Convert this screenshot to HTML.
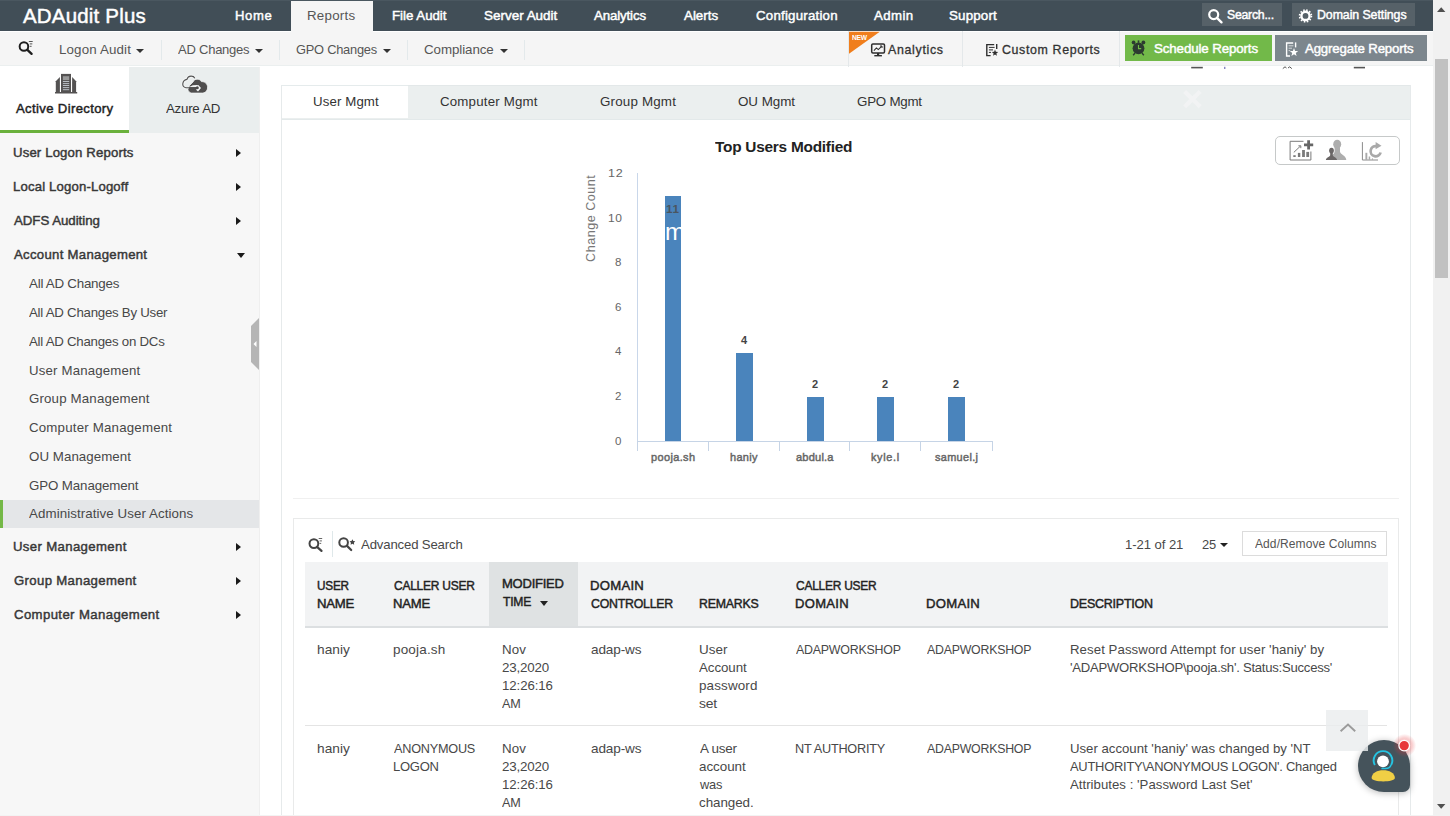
<!DOCTYPE html>
<html>
<head>
<meta charset="utf-8">
<title>ADAudit Plus</title>
<style>
*{box-sizing:border-box;margin:0;padding:0}
html,body{width:1450px;height:816px;overflow:hidden;background:#fff}
body{font-family:"Liberation Sans",sans-serif;font-size:14px;color:#333;position:relative}
.a{position:absolute}
.t{position:absolute;white-space:nowrap;line-height:1;transform-origin:0 0}
.cd{position:absolute;width:0;height:0;border-left:4.7px solid transparent;border-right:4.7px solid transparent;border-top:5px solid #333}
.cr{position:absolute;width:0;height:0;border-top:4.5px solid transparent;border-bottom:4.5px solid transparent;border-left:5.5px solid #1a1a1a}
svg{position:absolute;overflow:visible}
</style>
</head>
<body>
<!-- ===== top bar ===== -->
<div class="a" style="left:0;top:0;width:1432.5px;height:30.8px;background:#414e57"></div>
<div class="a" style="left:0;top:0;width:1432.5px;height:1px;background:#4a5760"></div>

<div class="a" style="left:1202px;top:3px;width:80px;height:23px;background:#566168"></div>
<div class="a" style="left:1292px;top:3px;width:123px;height:23px;background:#566168"></div>
<!-- ===== sub bar ===== -->
<div class="a" style="left:0;top:32px;width:1432.5px;height:34px;background:#f5f5f5;border-bottom:1px solid #ebefef"></div>
<div class="a" style="left:291px;top:1px;width:82px;height:32px;background:#f5f5f5"></div>
<div class="a" style="left:161px;top:40px;width:1px;height:20px;background:#e3e9eb"></div>
<div class="a" style="left:279px;top:40px;width:1px;height:20px;background:#e3e9eb"></div>
<div class="a" style="left:407px;top:40px;width:1px;height:20px;background:#e3e9eb"></div>
<div class="a" style="left:524px;top:40px;width:1px;height:20px;background:#e3e9eb"></div>
<div class="a" style="left:848px;top:31px;width:1px;height:36px;background:#e4e8ea"></div>
<div class="a" style="left:962px;top:31px;width:1px;height:36px;background:#e4e8ea"></div>
<div class="a" style="left:1119px;top:31px;width:1px;height:36px;background:#e4e8ea"></div>
<div class="cd" style="left:135.9px;top:49px;border-left-width:4.1px;border-right-width:4.1px;border-top-width:4.4px"></div>
<div class="cd" style="left:254.8px;top:49px;border-left-width:4.1px;border-right-width:4.1px;border-top-width:4.4px"></div>
<div class="cd" style="left:383.3px;top:49px;border-left-width:4.1px;border-right-width:4.1px;border-top-width:4.4px"></div>
<div class="cd" style="left:499.9px;top:49px;border-left-width:4.1px;border-right-width:4.1px;border-top-width:4.4px"></div>
<div class="a" style="left:1125px;top:34.9px;width:146.8px;height:26.5px;background:#72b949"></div>
<div class="a" style="left:1275.2px;top:34.9px;width:151.8px;height:26.5px;background:#7c868d"></div>
<!-- ===== sidebar ===== -->
<div class="a" style="left:0;top:66.5px;width:259px;height:750px;background:#f7f7f7"></div>
<div class="a" style="left:259px;top:67px;width:1px;height:749px;background:#efefef"></div>
<div class="a" style="left:0;top:66.5px;width:128.5px;height:66.3px;background:#fff;border-bottom:3.6px solid #6ab13c"></div>
<div class="a" style="left:128.5px;top:66.5px;width:130.5px;height:66.5px;background:#eaeeee"></div>
<div class="cr" style="left:236px;top:149px"></div>
<div class="cr" style="left:236px;top:183px"></div>
<div class="cr" style="left:236px;top:217px"></div>
<div class="cd" style="left:236.5px;top:253px;border-top-color:#1a1a1a"></div>
<div class="cr" style="left:236px;top:543px"></div>
<div class="cr" style="left:236px;top:577px"></div>
<div class="cr" style="left:236px;top:611px"></div>
<div class="a" style="left:0;top:500px;width:259px;height:28px;background:#e4e6e8;border-left:3px solid #74b847"></div>
<!-- collapse handle -->
<svg style="left:251px;top:318px" width="8" height="52" viewBox="0 0 8 52"><path d="M8 0 L0 8 L0 44 L8 52 Z" fill="#b5b5b5"/><path d="M5.5 23 L2.5 26 L5.5 29 Z" fill="#fff"/></svg>
<!-- ===== main ===== -->
<div class="a" style="left:281px;top:85px;width:1130px;height:740px;border:1px solid #e6eaeb"></div>
<div class="a" style="left:282px;top:85px;width:1128px;height:34.6px;background:#ebefef;border-top:1px solid #e3e8e9;border-bottom:1.6px solid #e3e9ea"></div>
<div class="a" style="left:282px;top:85px;width:126px;height:33px;background:#fff;border-top:1px solid #e5ebec"></div>
<!-- chart -->
<div class="a" style="left:1275px;top:136px;width:124.5px;height:28.6px;border:1.2px solid #c6c9c9;border-radius:5px"></div>
<div class="a" style="left:636.6px;top:173px;width:1.6px;height:268px;background:#c9d7ea"></div>
<div class="a" style="left:637px;top:440.6px;width:356px;height:1.2px;background:#c6d4e6"></div>
<div class="a" style="left:637px;top:441px;width:1px;height:10.3px;background:#c6d4e6"></div>
<div class="a" style="left:708px;top:441px;width:1px;height:10.3px;background:#c6d4e6"></div>
<div class="a" style="left:778.5px;top:441px;width:1px;height:10.3px;background:#c6d4e6"></div>
<div class="a" style="left:849.3px;top:441px;width:1px;height:10.3px;background:#c6d4e6"></div>
<div class="a" style="left:919.5px;top:441px;width:1px;height:10.3px;background:#c6d4e6"></div>
<div class="a" style="left:992px;top:441px;width:1px;height:10.3px;background:#c6d4e6"></div>
<div class="a" style="left:664.5px;top:196px;width:16.9px;height:245px;background:#4a84bc"></div>
<div class="a" style="left:735.6px;top:352.5px;width:17px;height:88.5px;background:#4a84bc"></div>
<div class="a" style="left:806.8px;top:397px;width:17px;height:44px;background:#4a84bc"></div>
<div class="a" style="left:876.9px;top:397px;width:17px;height:44px;background:#4a84bc"></div>
<div class="a" style="left:948.1px;top:397px;width:17px;height:44px;background:#4a84bc"></div>
<div class="a" style="left:664.5px;top:196px;width:16.9px;height:80px;overflow:hidden"><div class="t" style="left:0.5px;top:23.8px;font-size:24px;color:#fff">m</div></div>
<div class="t" style="left:583px;top:212px;font-size:12.6px;color:#777;letter-spacing:0.5px;transform:rotate(-90deg);transform-origin:center;width:90px;text-align:center;margin-left:-37px">Change Count</div>
<!-- separator under chart -->
<div class="a" style="left:293px;top:498px;width:1106px;height:1px;background:#f0f0f0"></div>
<!-- table box -->
<div class="a" style="left:293px;top:518px;width:1106px;height:310px;border:1px solid #e9eaea"></div>
<div class="a" style="left:332px;top:531px;width:1px;height:26px;background:#dfe8ea"></div>
<div class="a" style="left:1242px;top:531px;width:145px;height:25px;border:1px solid #dcdcdc;background:#fff"></div>
<div class="cd" style="left:1219.6px;top:543.2px;border-top-color:#222;border-left-width:4.2px;border-right-width:4.2px;border-top-width:4.2px"></div>
<div class="a" style="left:304.5px;top:561.5px;width:1083px;height:66.3px;background:#f2f3f4;border-bottom:2px solid #dcdfe1"></div>
<div class="a" style="left:489px;top:561.5px;width:89px;height:64.3px;background:#dfe2e3"></div>
<div class="cd" style="left:540px;top:601px;border-top-color:#222"></div>
<div class="a" style="left:305px;top:725px;width:1082px;height:1px;background:#e4e4e4"></div>
<div class="a" style="left:0;top:815px;width:1433px;height:1px;background:#f3f3f3"></div>
<svg style="left:0;top:0" width="1450" height="816" viewBox="0 0 1450 816">
<!-- subbar search -->
<g fill="none" stroke="#1e1e1e" stroke-linecap="round"><circle cx="23.95" cy="46.45" r="4.3" stroke-width="2"/><path d="M27.4 49.9 L31.6 53.9" stroke-width="2.3"/></g>
<path d="M28.8 41.5H32.7M29.8 43.9H32.3M29.8 46.3H31.6" stroke="#555" stroke-width="1" fill="none"/>
<!-- topbar search + gear -->
<g fill="none" stroke="#fff" stroke-linecap="round"><circle cx="1213.7" cy="14.6" r="4.5" stroke-width="2.2"/><path d="M1217.2 18.1 L1221.5 22.3" stroke-width="2.4"/></g>
<circle cx="1305.5" cy="15.9" r="4.1" fill="none" stroke="#fff" stroke-width="2.4"/>
<circle cx="1305.5" cy="15.9" r="5.9" fill="none" stroke="#fff" stroke-width="1.7" stroke-dasharray="1.55 1.54"/>
<!-- NEW -->
<polygon points="849,31.8 879.8,31.8 849,53.7" fill="#f07e1c"/>
<!-- analytics monitor -->
<g fill="none" stroke="#2e2e2e"><rect x="871.7" y="43.9" width="12.8" height="9" rx="1.2" stroke-width="1.5"/><path d="M878.1 53V55.2" stroke-width="2.2"/><path d="M874.3 55.7H881.9" stroke-width="1.4"/><path d="M873.9 50.6L876.4 47.9L878.3 49.6L881.6 46.3" stroke-width="1.1"/><path d="M880 46H882V48" stroke-width="1"/></g>
<!-- custom reports -->
<g fill="none" stroke="#2e2e2e"><path d="M994.2 44.6H986.8V55.6H990.6" stroke-width="1.4"/><path d="M996.7 44V49" stroke-width="1.4"/><path d="M988.9 47.4H994.6M988.9 49.9H993M988.9 52.4H991" stroke-width="1"/></g>
<polygon points="995.00,49.60 995.84,51.84 998.23,51.95 996.36,53.44 997.00,55.75 995.00,54.43 993.00,55.75 993.64,53.44 991.77,51.95 994.16,51.84" fill="#2e2e2e"/>
<!-- schedule alarm -->
<g fill="#2c3a30"><circle cx="1138.5" cy="48.3" r="5.9"/><circle cx="1133.6" cy="42.4" r="1.9"/><circle cx="1143.4" cy="42.4" r="1.9"/><rect x="1137.7" y="40.4" width="1.6" height="2.4"/></g>
<path d="M1135 53L1133.2 55.2M1142 53L1143.8 55.2" stroke="#2c3a30" stroke-width="1.4" fill="none"/>
<path d="M1138.5 45V48.6H1141.2" stroke="#71b947" stroke-width="1.1" fill="none"/>
<!-- aggregate -->
<g fill="none" stroke="#fff"><path d="M1293.2 43H1286.6V56H1290" stroke-width="1.4"/><path d="M1295.6 42.4V47.4" stroke-width="1.4"/><path d="M1288.6 45.8H1293.4M1288.6 48.2H1292M1288.6 50.6H1290.2" stroke-width="0.9" stroke-opacity="0.75"/></g>
<polygon points="1294.00,48.00 1295.09,50.90 1298.18,51.04 1295.76,52.97 1296.59,55.96 1294.00,54.25 1291.41,55.96 1292.24,52.97 1289.82,51.04 1292.91,50.90" fill="#fff"/>
<!-- remnants under subbar -->
<rect x="1191.2" y="66.8" width="11.6" height="1.6" fill="#555"/><rect x="1224.3" y="66.8" width="1" height="2.2" fill="#55a"/>
<path d="M1282.8 68.6L1285 66.8L1286.5 68M1288 68L1289.7 66.8L1291.8 68.6" stroke="#555" stroke-width="1" fill="none"/>
<rect x="1353.8" y="66.8" width="11.2" height="1.6" fill="#555"/>
<!-- AD building -->
<g fill="#545252"><rect x="61" y="73.9" width="10" height="18.4"/><polygon points="55.8,81.2 59.9,77 59.9,92.3 55.8,92.3"/><polygon points="72.1,77 76.1,81.2 76.1,92.3 72.1,92.3"/><rect x="55" y="92" width="22.2" height="1.5"/></g>
<rect x="62.9" y="76.2" width="6.3" height="3.9" fill="#9a9a9a"/>
<path d="M62.9 81.5H69.2M62.9 83.6H69.2M62.9 85.5H69.2M62.9 87.6H69.2M62.9 89.7H69.2" stroke="#c4cbd1" stroke-width="0.9" fill="none"/>
<!-- Azure cloud -->
<path d="M194.8 78.2 C193.6 75.4 188.2 75 186.9 79.4 C182.4 80 180.9 86.8 185.9 87.7" fill="none" stroke="#f6f8f8" stroke-width="2.6"/>
<path d="M191.6 93.1 C189.4 92.8 188 91 187.9 89.2 L189.6 85.4 L193.2 81.8 C194.2 78.4 199.8 78.2 201.4 81.6 C205.8 81.2 208.8 85.6 207.2 89.6 C206.4 91.8 204.6 93.1 202.5 93.1 Z" fill="#4f4e4e" stroke="#f3f5f5" stroke-width="0.8"/>
<polygon points="189.2,87 192.8,85.3 197.2,84.9 197.2,87.1" fill="#f1f3f3"/>
<polygon points="196.4,85.6 198.3,84.9 201,88.1 198,91.5 196.4,90" fill="#f6f8f8"/>
<path d="M194.8 78.2 C193.6 75.4 188.2 75 186.9 79.4 C182.4 80 180.9 86.8 185.9 87.7 H197" fill="none" stroke="#555" stroke-width="1.15"/>
<circle cx="197.3" cy="87.8" r="1.5" fill="#4a4949"/>
<!-- chart icons -->
<g fill="none" stroke="#7a7a7a" stroke-width="1"><path d="M1303.5 141.3H1290.1V160H1310.9V151.5"/><path d="M1293.8 152.4L1300.3 146.2"/><path d="M1298.4 145.8H1300.8V148.2"/></g>
<g fill="#7a7a7a"><rect x="1293.3" y="155.2" width="2.4" height="1.8"/><rect x="1297.9" y="152.9" width="2.4" height="4.1"/><rect x="1302.1" y="150" width="2.8" height="7"/><rect x="1306.3" y="151.9" width="2.8" height="5.1"/></g>
<path d="M1308.6 140.3V149.5M1304 144.9H1313.2" stroke="#666" stroke-width="2.8" fill="none"/>
<g fill="#adadad"><ellipse cx="1337.2" cy="144.3" rx="4" ry="4.6"/><path d="M1334.6 147.5 H1340 V151.5 C1340 154.5 1346.3 155.5 1346.3 159.9 H1329.8 C1329.8 155.5 1334.6 154.5 1334.6 151.5Z"/></g>
<g fill="#6a6666"><ellipse cx="1331.5" cy="150.6" rx="2.4" ry="2.9"/><path d="M1330.2 152.8 H1332.8 V155 C1332.8 157 1337 157.5 1337 159.9 H1325.9 C1325.9 157.5 1330.2 157 1330.2 155Z"/></g>
<path d="M1362.4 142.1V160H1378" stroke="#8a8a8a" stroke-width="1" fill="none"/>
<g fill="#a9a9a9"><rect x="1365.4" y="152.8" width="1.9" height="7"/><rect x="1368.7" y="156.5" width="1.5" height="3.3"/><rect x="1371.9" y="158.4" width="1.1" height="1.4"/></g>
<path d="M1380.63 152.52 A5.1 5.1 0 1 1 1376.59 146.18" stroke="#a9a9a9" stroke-width="2.7" fill="none"/>
<polygon points="1375.6,141.9 1381.5,145.7 1375.6,149.2" fill="#a9a9a9"/>
<!-- table toolbar icons -->
<g fill="none" stroke="#444" stroke-linecap="round"><circle cx="313.9" cy="543.6" r="4.4" stroke-width="2"/><path d="M317.3 547.1 L321.5 550.9" stroke-width="2.2"/>
<circle cx="343.6" cy="542.5" r="4.3" stroke-width="2"/><path d="M347 545.9 L351.2 550" stroke-width="2.2"/></g>
<path d="M318.7 538.5H322.2M319.6 540.9H321.9M319.6 543.4H321.2" stroke="#666" stroke-width="1" fill="none"/>
<polygon points="352.40,539.20 353.31,540.95 355.25,541.27 353.87,542.68 354.16,544.63 352.40,543.75 350.64,544.63 350.93,542.68 349.55,541.27 351.49,540.95" fill="#444"/>
<!-- faint X on tab strip -->
<path d="M1184.6 91.6L1200.2 106.8M1200.2 91.6L1184.6 106.8" stroke="#f2f3f4" stroke-width="4.2" fill="none"/>
</svg>
<div class="t" style="left:23.00px;top:6px;font-size:20.5px;color:#fff;letter-spacing:0.188px;transform:scaleX(0.9995);-webkit-text-stroke:0.45px currentColor;">ADAudit Plus</div>
<div class="t" style="left:235.00px;top:9px;font-size:13.2px;color:#fff;letter-spacing:0.619px;transform:scaleX(0.9928);-webkit-text-stroke:0.45px currentColor;">Home</div>
<div class="t" style="left:392.00px;top:9px;font-size:13.2px;color:#fff;letter-spacing:-0.012px;transform:scaleX(1.0067);-webkit-text-stroke:0.45px currentColor;">File Audit</div>
<div class="t" style="left:484.00px;top:9px;font-size:13.2px;color:#fff;transform:scaleX(1.0204);-webkit-text-stroke:0.45px currentColor;">Server Audit</div>
<div class="t" style="left:594.00px;top:9px;font-size:13.2px;color:#fff;letter-spacing:-0.134px;transform:scaleX(1.0066);-webkit-text-stroke:0.45px currentColor;">Analytics</div>
<div class="t" style="left:684.00px;top:9px;font-size:13.2px;color:#fff;transform:scaleX(1.0111);-webkit-text-stroke:0.45px currentColor;">Alerts</div>
<div class="t" style="left:756.00px;top:9px;font-size:13.2px;color:#fff;letter-spacing:0.224px;transform:scaleX(1.0052);-webkit-text-stroke:0.45px currentColor;">Configuration</div>
<div class="t" style="left:874.00px;top:9px;font-size:13.2px;color:#fff;letter-spacing:0.439px;transform:scaleX(1.0013);-webkit-text-stroke:0.45px currentColor;">Admin</div>
<div class="t" style="left:949.00px;top:9px;font-size:13.2px;color:#fff;letter-spacing:0.163px;transform:scaleX(1.0127);-webkit-text-stroke:0.45px currentColor;">Support</div>
<div class="t" style="left:307.00px;top:9px;font-size:13.2px;color:#555;letter-spacing:0.236px;transform:scaleX(1.0110);">Reports</div>
<div class="t" style="left:1227.00px;top:9px;font-size:12.4px;color:#fff;letter-spacing:-0.250px;transform:scaleX(0.9910);-webkit-text-stroke:0.45px currentColor;">Search...</div>
<div class="t" style="left:1317.00px;top:9px;font-size:12.4px;color:#fff;letter-spacing:-0.065px;transform:scaleX(0.9952);-webkit-text-stroke:0.45px currentColor;">Domain Settings</div>
<div class="t" style="left:59.00px;top:43px;font-size:13.2px;color:#555;letter-spacing:0.137px;transform:scaleX(1.0122);">Logon Audit</div>
<div class="t" style="left:178.00px;top:43px;font-size:13.2px;color:#555;letter-spacing:-0.250px;transform:scaleX(0.9876);">AD Changes</div>
<div class="t" style="left:296.00px;top:43px;font-size:13.2px;color:#555;letter-spacing:-0.250px;transform:scaleX(0.9750);">GPO Changes</div>
<div class="t" style="left:424.00px;top:43px;font-size:13.2px;color:#555;letter-spacing:-0.067px;transform:scaleX(1.0108);">Compliance</div>
<div class="t" style="left:888.00px;top:44px;font-size:12.4px;color:#333;letter-spacing:0.677px;transform:scaleX(1.0003);-webkit-text-stroke:0.45px currentColor;-webkit-text-stroke:0.3px currentColor;">Analytics</div>
<div class="t" style="left:852.00px;top:34px;font-size:7px;color:#fff;letter-spacing:-0.250px;transform:scaleX(0.9557);font-weight:bold;">NEW</div>
<div class="t" style="left:1002.00px;top:44px;font-size:12.4px;color:#333;letter-spacing:0.629px;transform:scaleX(1.0003);-webkit-text-stroke:0.45px currentColor;-webkit-text-stroke:0.3px currentColor;">Custom Reports</div>
<div class="t" style="left:1154.00px;top:42px;font-size:13.2px;color:#fff;letter-spacing:-0.129px;transform:scaleX(1.0113);-webkit-text-stroke:0.45px currentColor;">Schedule Reports</div>
<div class="t" style="left:1305.00px;top:42px;font-size:13.2px;color:#fff;letter-spacing:-0.131px;transform:scaleX(1.0003);-webkit-text-stroke:0.45px currentColor;">Aggregate Reports</div>
<div class="t" style="left:16.00px;top:102px;font-size:13.2px;color:#222;letter-spacing:0.351px;transform:scaleX(0.9951);-webkit-text-stroke:0.45px currentColor;">Active Directory</div>
<div class="t" style="left:166.00px;top:102px;font-size:13.2px;color:#333;letter-spacing:-0.250px;transform:scaleX(1.0077);">Azure AD</div>
<div class="t" style="left:13.00px;top:146px;font-size:13.2px;color:#383838;letter-spacing:0.140px;transform:scaleX(0.9992);-webkit-text-stroke:0.45px currentColor;">User Logon Reports</div>
<div class="t" style="left:13.00px;top:180px;font-size:13.2px;color:#383838;letter-spacing:0.164px;transform:scaleX(0.9965);-webkit-text-stroke:0.45px currentColor;">Local Logon-Logoff</div>
<div class="t" style="left:14.00px;top:214px;font-size:13.2px;color:#383838;letter-spacing:-0.030px;transform:scaleX(1.0059);-webkit-text-stroke:0.45px currentColor;">ADFS Auditing</div>
<div class="t" style="left:14.00px;top:248px;font-size:13.2px;color:#383838;letter-spacing:0.304px;transform:scaleX(0.9966);-webkit-text-stroke:0.45px currentColor;">Account Management</div>
<div class="t" style="left:13.00px;top:540px;font-size:13.2px;color:#383838;letter-spacing:0.356px;transform:scaleX(0.9988);-webkit-text-stroke:0.45px currentColor;">User Management</div>
<div class="t" style="left:14.00px;top:574px;font-size:13.2px;color:#383838;letter-spacing:0.345px;transform:scaleX(0.9978);-webkit-text-stroke:0.45px currentColor;">Group Management</div>
<div class="t" style="left:14.00px;top:608px;font-size:13.2px;color:#383838;letter-spacing:0.385px;transform:scaleX(0.9982);-webkit-text-stroke:0.45px currentColor;">Computer Management</div>
<div class="t" style="left:29.00px;top:277px;font-size:13.2px;color:#484848;letter-spacing:-0.250px;transform:scaleX(1.0139);">All AD Changes</div>
<div class="t" style="left:29.00px;top:306px;font-size:13.2px;color:#484848;letter-spacing:-0.250px;transform:scaleX(1.0061);">All AD Changes By User</div>
<div class="t" style="left:29.00px;top:335px;font-size:13.2px;color:#484848;letter-spacing:-0.250px;transform:scaleX(1.0057);">All AD Changes on DCs</div>
<div class="t" style="left:29.00px;top:364px;font-size:13.2px;color:#484848;letter-spacing:0.177px;transform:scaleX(1.0019);">User Management</div>
<div class="t" style="left:29.00px;top:392px;font-size:13.2px;color:#484848;letter-spacing:0.145px;transform:scaleX(1.0091);">Group Management</div>
<div class="t" style="left:29.00px;top:421px;font-size:13.2px;color:#484848;letter-spacing:0.190px;transform:scaleX(1.0074);">Computer Management</div>
<div class="t" style="left:29.00px;top:450px;font-size:13.2px;color:#484848;letter-spacing:0.045px;transform:scaleX(1.0093);">OU Management</div>
<div class="t" style="left:29.00px;top:479px;font-size:13.2px;color:#484848;letter-spacing:-0.114px;transform:scaleX(1.0100);">GPO Management</div>
<div class="t" style="left:29.00px;top:507px;font-size:13.2px;color:#484848;letter-spacing:0.083px;transform:scaleX(1.0096);">Administrative User Actions</div>
<div class="t" style="left:313.00px;top:95px;font-size:13.2px;color:#333;letter-spacing:0.111px;transform:scaleX(1.0051);">User Mgmt</div>
<div class="t" style="left:440.00px;top:95px;font-size:13.2px;color:#333;letter-spacing:0.194px;transform:scaleX(1.0066);">Computer Mgmt</div>
<div class="t" style="left:600.00px;top:95px;font-size:13.2px;color:#333;letter-spacing:0.164px;transform:scaleX(1.0146);">Group Mgmt</div>
<div class="t" style="left:738.00px;top:95px;font-size:13.2px;color:#333;letter-spacing:-0.058px;transform:scaleX(1.0164);">OU Mgmt</div>
<div class="t" style="left:857.00px;top:95px;font-size:13.2px;color:#333;letter-spacing:-0.250px;transform:scaleX(1.0130);">GPO Mgmt</div>
<div class="t" style="left:715.00px;top:139px;font-size:15.5px;color:#222;letter-spacing:-0.250px;transform:scaleX(0.9930);font-weight:bold;">Top Users Modified</div>
<div class="t" style="left:608.00px;top:168px;font-size:11.5px;color:#666;letter-spacing:0.604px;transform:scaleX(1.0927);">12</div>
<div class="t" style="left:608.00px;top:213px;font-size:11.5px;color:#666;letter-spacing:0.604px;transform:scaleX(1.0447);">10</div>
<div class="t" style="left:615.00px;top:257px;font-size:11.5px;color:#666;transform:scaleX(1.0000);">8</div>
<div class="t" style="left:615.00px;top:302px;font-size:11.5px;color:#666;transform:scaleX(1.0000);">6</div>
<div class="t" style="left:615.00px;top:346px;font-size:11.5px;color:#666;transform:scaleX(1.0000);">4</div>
<div class="t" style="left:615.00px;top:391px;font-size:11.5px;color:#666;transform:scaleX(1.0000);">2</div>
<div class="t" style="left:615.00px;top:436px;font-size:11.5px;color:#666;transform:scaleX(1.0000);">0</div>
<div class="t" style="left:651.00px;top:452px;font-size:11px;color:#666;letter-spacing:0.361px;transform:scaleX(0.9971);-webkit-text-stroke:0.45px currentColor;">pooja.sh</div>
<div class="t" style="left:730.00px;top:452px;font-size:11px;color:#666;letter-spacing:0.301px;transform:scaleX(0.9974);-webkit-text-stroke:0.45px currentColor;">haniy</div>
<div class="t" style="left:796.00px;top:452px;font-size:11px;color:#666;letter-spacing:0.172px;transform:scaleX(1.0100);-webkit-text-stroke:0.45px currentColor;">abdul.a</div>
<div class="t" style="left:871.00px;top:452px;font-size:11px;color:#666;letter-spacing:0.676px;transform:scaleX(0.9901);-webkit-text-stroke:0.45px currentColor;">kyle.l</div>
<div class="t" style="left:935.00px;top:452px;font-size:11px;color:#666;letter-spacing:0.355px;transform:scaleX(0.9896);-webkit-text-stroke:0.45px currentColor;">samuel.j</div>
<div class="t" style="left:741.00px;top:335px;font-size:11px;color:#444;transform:scaleX(1.0000);font-weight:bold;">4</div>
<div class="t" style="left:812.00px;top:379px;font-size:11px;color:#444;transform:scaleX(1.0000);font-weight:bold;">2</div>
<div class="t" style="left:882.00px;top:379px;font-size:11px;color:#444;transform:scaleX(1.0000);font-weight:bold;">2</div>
<div class="t" style="left:953.00px;top:379px;font-size:11px;color:#444;transform:scaleX(1.0000);font-weight:bold;">2</div>
<div class="t" style="left:666.00px;top:204px;font-size:11px;color:#4a5560;letter-spacing:0.489px;transform:scaleX(1.0628);font-weight:bold;">11</div>
<div class="t" style="left:361.00px;top:538px;font-size:13.2px;color:#484848;letter-spacing:-0.162px;transform:scaleX(0.9994);">Advanced Search</div>
<div class="t" style="left:1125.00px;top:538px;font-size:13.2px;color:#484848;letter-spacing:-0.062px;transform:scaleX(0.9925);">1-21 of 21</div>
<div class="t" style="left:1202.00px;top:538px;font-size:13.2px;color:#484848;letter-spacing:-0.250px;transform:scaleX(0.9792);">25</div>
<div class="t" style="left:1255.00px;top:538px;font-size:12px;color:#555;letter-spacing:0.070px;transform:scaleX(1.0031);">Add/Remove Columns</div>
<div class="t" style="left:317.00px;top:579px;font-size:13.2px;color:#222;letter-spacing:-0.250px;transform:scaleX(0.8924);-webkit-text-stroke:0.45px currentColor;">USER</div>
<div class="t" style="left:317.00px;top:597px;font-size:13.2px;color:#222;letter-spacing:-0.250px;transform:scaleX(0.9995);-webkit-text-stroke:0.45px currentColor;">NAME</div>
<div class="t" style="left:394.00px;top:579px;font-size:13.2px;color:#222;letter-spacing:-0.250px;transform:scaleX(0.9080);-webkit-text-stroke:0.45px currentColor;">CALLER USER</div>
<div class="t" style="left:393.00px;top:597px;font-size:13.2px;color:#222;letter-spacing:-0.185px;transform:scaleX(0.9936);-webkit-text-stroke:0.45px currentColor;">NAME</div>
<div class="t" style="left:502.00px;top:577px;font-size:13.2px;color:#222;letter-spacing:-0.242px;transform:scaleX(0.9863);-webkit-text-stroke:0.45px currentColor;">MODIFIED</div>
<div class="t" style="left:503.00px;top:595px;font-size:13.2px;color:#222;letter-spacing:-0.250px;transform:scaleX(0.9192);-webkit-text-stroke:0.45px currentColor;">TIME</div>
<div class="t" style="left:590.00px;top:579px;font-size:13.2px;color:#222;letter-spacing:0.255px;transform:scaleX(0.9966);-webkit-text-stroke:0.45px currentColor;">DOMAIN</div>
<div class="t" style="left:591.00px;top:597px;font-size:13.2px;color:#222;letter-spacing:-0.250px;transform:scaleX(0.9355);-webkit-text-stroke:0.45px currentColor;">CONTROLLER</div>
<div class="t" style="left:699.00px;top:597px;font-size:13.2px;color:#222;letter-spacing:-0.250px;transform:scaleX(0.9360);-webkit-text-stroke:0.45px currentColor;">REMARKS</div>
<div class="t" style="left:796.00px;top:579px;font-size:13.2px;color:#222;letter-spacing:-0.250px;transform:scaleX(0.9057);-webkit-text-stroke:0.45px currentColor;">CALLER USER</div>
<div class="t" style="left:795.00px;top:597px;font-size:13.2px;color:#222;letter-spacing:0.305px;transform:scaleX(0.9885);-webkit-text-stroke:0.45px currentColor;">DOMAIN</div>
<div class="t" style="left:926.00px;top:597px;font-size:13.2px;color:#222;letter-spacing:0.255px;transform:scaleX(0.9964);-webkit-text-stroke:0.45px currentColor;">DOMAIN</div>
<div class="t" style="left:1070.00px;top:597px;font-size:13.2px;color:#222;letter-spacing:-0.250px;transform:scaleX(0.9486);-webkit-text-stroke:0.45px currentColor;">DESCRIPTION</div>
<div class="t" style="left:317.00px;top:643px;font-size:13.2px;color:#484848;letter-spacing:0.017px;transform:scaleX(1.0376);">haniy</div>
<div class="t" style="left:393.00px;top:643px;font-size:13.2px;color:#484848;letter-spacing:0.175px;transform:scaleX(1.0237);">pooja.sh</div>
<div class="t" style="left:502.00px;top:643px;font-size:13.2px;color:#484848;letter-spacing:0.071px;transform:scaleX(1.0093);">Nov</div>
<div class="t" style="left:502.00px;top:661px;font-size:13.2px;color:#484848;letter-spacing:-0.181px;transform:scaleX(1.0132);">23,2020</div>
<div class="t" style="left:502.00px;top:679px;font-size:13.2px;color:#484848;letter-spacing:-0.071px;transform:scaleX(1.0019);">12:26:16</div>
<div class="t" style="left:502.00px;top:697px;font-size:13.2px;color:#484848;letter-spacing:-0.250px;transform:scaleX(0.9569);">AM</div>
<div class="t" style="left:591.00px;top:643px;font-size:13.2px;color:#484848;letter-spacing:-0.125px;transform:scaleX(1.0284);">adap-ws</div>
<div class="t" style="left:699.00px;top:643px;font-size:13.2px;color:#484848;letter-spacing:0.016px;transform:scaleX(1.0199);">User</div>
<div class="t" style="left:699.00px;top:661px;font-size:13.2px;color:#484848;letter-spacing:-0.081px;transform:scaleX(1.0109);">Account</div>
<div class="t" style="left:699.00px;top:679px;font-size:13.2px;color:#484848;letter-spacing:0.128px;transform:scaleX(1.0180);">password</div>
<div class="t" style="left:699.00px;top:697px;font-size:13.2px;color:#484848;letter-spacing:-0.214px;transform:scaleX(1.0578);">set</div>
<div class="t" style="left:796.00px;top:643px;font-size:13.2px;color:#484848;letter-spacing:-0.250px;transform:scaleX(0.9405);">ADAPWORKSHOP</div>
<div class="t" style="left:927.00px;top:643px;font-size:13.2px;color:#484848;letter-spacing:-0.250px;transform:scaleX(0.9360);">ADAPWORKSHOP</div>
<div class="t" style="left:1070.00px;top:643px;font-size:13.2px;color:#484848;letter-spacing:0.068px;transform:scaleX(1.0025);">Reset Password Attempt for user &#x27;haniy&#x27; by</div>
<div class="t" style="left:1070.00px;top:661px;font-size:13.2px;color:#484848;letter-spacing:-0.250px;transform:scaleX(0.9942);">&#x27;ADAPWORKSHOP\pooja.sh&#x27;. Status:Success&#x27;</div>
<div class="t" style="left:317.00px;top:742px;font-size:13.2px;color:#484848;letter-spacing:0.017px;transform:scaleX(1.0376);">haniy</div>
<div class="t" style="left:394.00px;top:742px;font-size:13.2px;color:#484848;letter-spacing:-0.250px;transform:scaleX(0.9624);">ANONYMOUS</div>
<div class="t" style="left:393.00px;top:760px;font-size:13.2px;color:#484848;letter-spacing:-0.250px;transform:scaleX(0.9869);">LOGON</div>
<div class="t" style="left:502.00px;top:742px;font-size:13.2px;color:#484848;letter-spacing:0.071px;transform:scaleX(1.0093);">Nov</div>
<div class="t" style="left:502.00px;top:760px;font-size:13.2px;color:#484848;letter-spacing:-0.181px;transform:scaleX(1.0132);">23,2020</div>
<div class="t" style="left:502.00px;top:778px;font-size:13.2px;color:#484848;letter-spacing:-0.071px;transform:scaleX(1.0019);">12:26:16</div>
<div class="t" style="left:502.00px;top:796px;font-size:13.2px;color:#484848;letter-spacing:-0.250px;transform:scaleX(0.9569);">AM</div>
<div class="t" style="left:591.00px;top:742px;font-size:13.2px;color:#484848;letter-spacing:-0.125px;transform:scaleX(1.0284);">adap-ws</div>
<div class="t" style="left:700.00px;top:742px;font-size:13.2px;color:#484848;letter-spacing:-0.250px;transform:scaleX(1.0223);">A user</div>
<div class="t" style="left:699.00px;top:760px;font-size:13.2px;color:#484848;letter-spacing:-0.046px;transform:scaleX(1.0178);">account</div>
<div class="t" style="left:700.00px;top:778px;font-size:13.2px;color:#484848;letter-spacing:-0.250px;transform:scaleX(0.9741);">was</div>
<div class="t" style="left:699.00px;top:796px;font-size:13.2px;color:#484848;letter-spacing:-0.050px;transform:scaleX(1.0148);">changed.</div>
<div class="t" style="left:795.00px;top:742px;font-size:13.2px;color:#484848;letter-spacing:-0.250px;transform:scaleX(0.9618);">NT AUTHORITY</div>
<div class="t" style="left:927.00px;top:742px;font-size:13.2px;color:#484848;letter-spacing:-0.250px;transform:scaleX(0.9360);">ADAPWORKSHOP</div>
<div class="t" style="left:1070.00px;top:742px;font-size:13.2px;color:#484848;transform:scaleX(1.0001);">User account &#x27;haniy&#x27; was changed by &#x27;NT</div>
<div class="t" style="left:1070.00px;top:760px;font-size:13.2px;color:#484848;letter-spacing:-0.250px;transform:scaleX(0.9794);">AUTHORITY\ANONYMOUS LOGON&#x27;. Changed</div>
<div class="t" style="left:1070.00px;top:778px;font-size:13.2px;color:#484848;letter-spacing:0.027px;transform:scaleX(0.9999);">Attributes : &#x27;Password Last Set&#x27;</div>
<!-- scroll top + chat -->
<div class="a" style="left:1358px;top:740px;width:52px;height:52px;background:#45535b;border-radius:26px 26px 7px 26px;box-shadow:0 1px 7px rgba(0,0,0,0.28)"></div>
<div class="a" style="left:1392.7px;top:734.1px;width:23px;height:23px;border-radius:50%;background:radial-gradient(circle,rgba(232,55,58,0.26) 45%,rgba(232,55,58,0) 72%)"></div>
<svg style="left:1358px;top:740px" width="52" height="52" viewBox="0 0 52 52">
<path d="M16.9 25 A9.3 9.3 0 1 1 33.1 25" fill="none" stroke="#25c4e2" stroke-width="1.9"/>
<path d="M33 25 Q32 28.4 27.6 28.6 H23.4" fill="none" stroke="#25c4e2" stroke-width="1.5"/>
<circle cx="25" cy="21.3" r="5.9" fill="#fff"/>
<path d="M13.6 38 C13.6 27.5 36.9 27.5 36.9 38 C36.9 42.5 13.6 42.5 13.6 38Z" fill="#f0cf45"/>
<circle cx="46.2" cy="5.6" r="5.3" fill="#e8373a" stroke="#fff" stroke-width="1.3"/>
</svg>
<div class="a" style="left:1326px;top:709.6px;width:42.3px;height:41.9px;background:rgba(234,237,238,0.82)"></div>
<svg style="left:1339px;top:722px" width="18" height="12" viewBox="0 0 18 12"><path d="M1.6 9.3 L9 2.6 L16.2 9.3" fill="none" stroke="#9b9b9b" stroke-width="1.9"/></svg>
<!-- ===== scrollbar ===== -->
<div class="a" style="left:1432.5px;top:0;width:17.5px;height:816px;background:#f1f1f1"></div>
<div class="a" style="left:1434.5px;top:59.3px;width:13.7px;height:218.3px;background:#c1c1c1"></div>
<svg style="left:1437px;top:6.8px" width="8.4" height="5.2" viewBox="0 0 10 6"><path d="M0 6 L5 0.3 L10 6Z" fill="#505050"/></svg>
<svg style="left:1437px;top:803.5px" width="8.4" height="5.2" viewBox="0 0 10 6"><path d="M0 0 L5 5.7 L10 0Z" fill="#505050"/></svg>
</body>
</html>
